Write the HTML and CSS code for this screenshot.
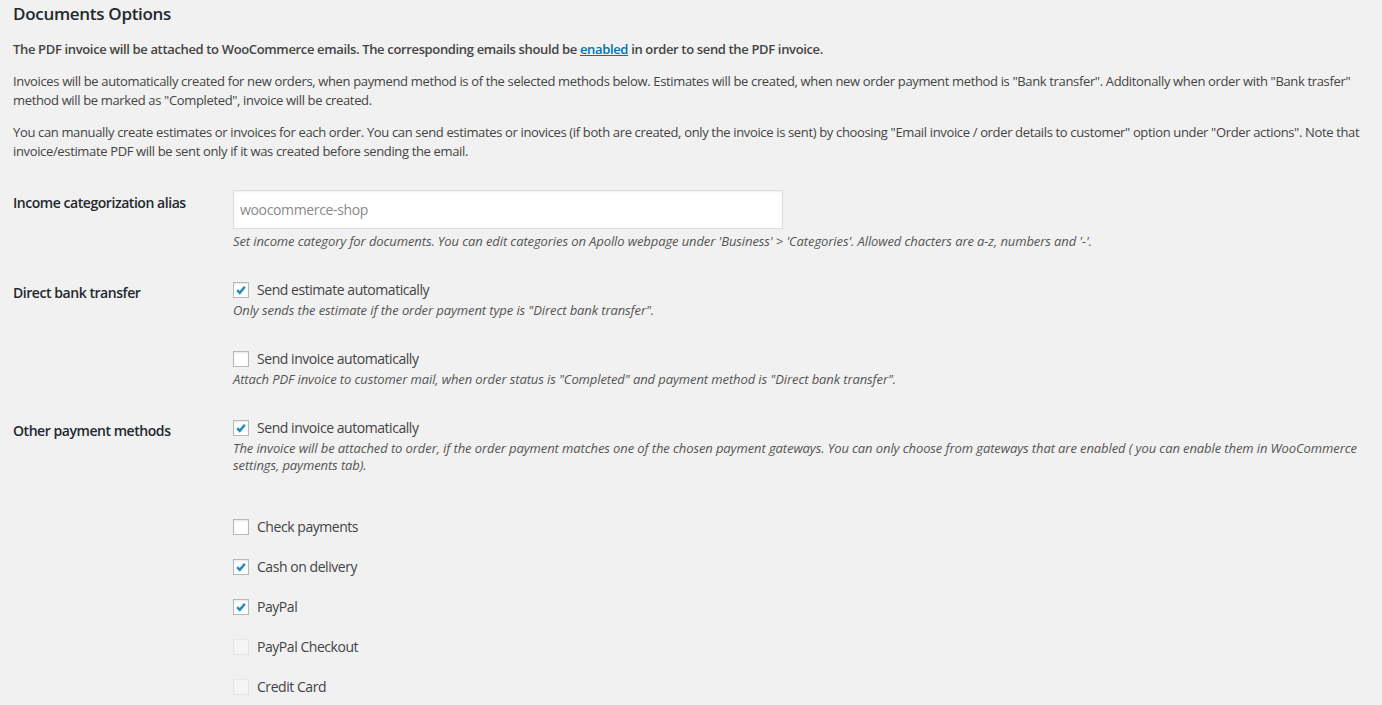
FILE: index.html
```html
<!DOCTYPE html>
<html lang="en">

<head>
    <meta charset="UTF-8">
    <meta name="viewport" content="width=device-width, initial-scale=1.0">
    <title>Documents Options</title>
    <link rel="stylesheet" href="styles.css">
</head>

<body>
    <div class="wrap">
        <h2>Documents Options</h2>

        <p><strong>The PDF invoice will be attached to WooCommerce emails. The corresponding emails should be <a href="#">enabled</a> in order to send the PDF invoice.</strong></p>
        <p>Invoices will be automatically created for new orders, when paymend method is of the selected methods below. Estimates will be created, when new order payment method is "Bank transfer". Additonally when order with "Bank trasfer" method will be marked as "Completed", invoice will be created.</p>
        <p>You can manually create estimates or invoices for each order. You can send estimates or inovices (if both are created, only the invoice is sent) by choosing "Email invoice / order details to customer" option under "Order actions". Note that invoice/estimate PDF will be sent only if it was created before sending the email.</p>

        <div class="form-table">
            <div class="row">
                <div class="row-label">Income categorization alias</div>
                <div class="row-field">
                    <input type="text" class="text-input" value="woocommerce-shop">
                    <p class="description">Set income category for documents. You can edit categories on Apollo webpage under 'Business' &gt; 'Categories'. Allowed chacters are a-z, numbers and '-'.</p>
                </div>
            </div>

            <div class="row">
                <div class="row-label">Direct bank transfer</div>
                <div class="row-field">
                    <div class="option">
                        <label class="check-line">
                            <span class="checkbox checked"><svg viewBox="0 0 16 16"><polyline points="3.6,8.2 6.6,11.3 12.4,4.2"/></svg></span>
                            Send estimate automatically
                        </label>
                        <p class="description">Only sends the estimate if the order payment type is "Direct bank transfer".</p>
                    </div>
                    <div class="option">
                        <label class="check-line">
                            <span class="checkbox"></span>
                            Send invoice automatically
                        </label>
                        <p class="description">Attach PDF invoice to customer mail, when order status is "Completed" and payment method is "Direct bank transfer".</p>
                    </div>
                </div>
            </div>

            <div class="row">
                <div class="row-label">Other payment methods</div>
                <div class="row-field">
                    <div class="option">
                        <label class="check-line">
                            <span class="checkbox checked"><svg viewBox="0 0 16 16"><polyline points="3.6,8.2 6.6,11.3 12.4,4.2"/></svg></span>
                            Send invoice automatically
                        </label>
                        <p class="description">The invoice will be attached to order, if the order payment matches one of the chosen payment gateways. You can only choose from gateways that are enabled ( you can enable them in WooCommerce settings, payments tab).</p>
                    </div>
                    <div class="gateways">
                        <label class="check-line">
                            <span class="checkbox"></span>
                            Check payments
                        </label>
                        <label class="check-line">
                            <span class="checkbox checked"><svg viewBox="0 0 16 16"><polyline points="3.6,8.2 6.6,11.3 12.4,4.2"/></svg></span>
                            Cash on delivery
                        </label>
                        <label class="check-line">
                            <span class="checkbox checked"><svg viewBox="0 0 16 16"><polyline points="3.6,8.2 6.6,11.3 12.4,4.2"/></svg></span>
                            PayPal
                        </label>
                        <label class="check-line">
                            <span class="checkbox disabled"></span>
                            PayPal Checkout
                        </label>
                        <label class="check-line">
                            <span class="checkbox disabled"></span>
                            Credit Card
                        </label>
                    </div>
                </div>
            </div>
        </div>
    </div>
</body>

</html>
```

FILE: styles.css
```css
* {
    box-sizing: border-box;
    margin: 0;
    padding: 0;
}

body {
    background: #f1f1f1;
    color: #444;
    font-family: "Open Sans", sans-serif;
    font-size: 13px;
    line-height: 1.5;
    letter-spacing: -0.35px;
    overflow: hidden;
}

.wrap {
    padding: 0 12px 0 13px;
}

h2 {
    font-size: 17px;
    font-weight: 600;
    color: #23282d;
    line-height: 1.3;
    letter-spacing: -0.3px;
    padding-top: 3px;
    margin-bottom: 15px;
}

p {
    margin: 0 0 12px;
}

strong {
    font-weight: 600;
}

a {
    color: #0073aa;
}

.row {
    display: flex;
}

.row-label {
    width: 220px;
    flex-shrink: 0;
    padding: 20px 10px 20px 0;
    font-size: 14px;
    font-weight: 600;
    line-height: 1.3;
    letter-spacing: -0.45px;
    color: #23282d;
}

.row-field {
    flex: 1;
    padding: 16px 0 14px 0;
}

.text-input {
    display: block;
    width: 550px;
    height: 39px;
    padding: 0 6px;
    border: 1px solid #ddd;
    background: #fff;
    box-shadow: inset 0 1px 2px rgba(0, 0, 0, 0.07);
    font-family: "Open Sans", sans-serif;
    font-size: 14px;
    letter-spacing: -0.35px;
    color: #8a8a8a;
    outline: none;
}

.description {
    margin: 2px 0 0;
    font-style: italic;
    line-height: 17px;
    letter-spacing: -0.1px;
    color: #555;
}

.text-input + .description {
    margin-top: 4px;
}

.option + .option {
    margin-top: 30px;
}

.check-line {
    display: flex;
    align-items: center;
    gap: 8px;
    height: 20px;
    font-size: 14px;
    letter-spacing: -0.45px;
}

.checkbox {
    display: block;
    width: 16px;
    height: 16px;
    border: 1px solid #b4b9be;
    background: #fff;
    box-shadow: inset 0 1px 2px rgba(0, 0, 0, 0.1);
}

.checkbox svg {
    display: block;
    width: 14px;
    height: 14px;
}

.checkbox polyline {
    fill: none;
    stroke: #1e8cbe;
    stroke-width: 2.8;
}

.checkbox.disabled {
    border-color: rgba(220, 220, 220, 0.6);
    background: rgba(255, 255, 255, 0.3);
    box-shadow: none;
}

.gateways {
    margin-top: 43px;
    display: flex;
    flex-direction: column;
    gap: 20px;
}
```
